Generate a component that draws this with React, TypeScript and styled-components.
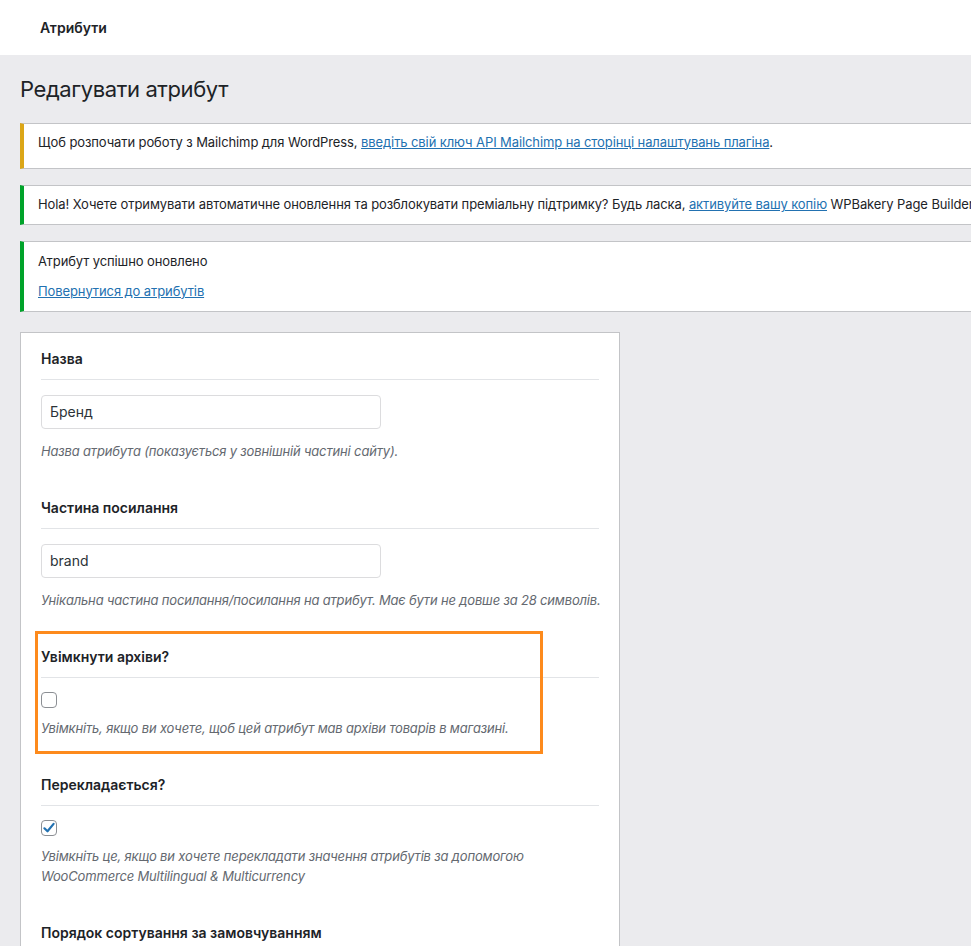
import styled, { createGlobalStyle } from 'styled-components';

const GlobalStyle = createGlobalStyle`
  html, body {
    margin: 0;
    padding: 0;
    background: #ebebee;
    overflow-x: hidden;
  }
  body {
    font-family: Inter, "Noto Sans", sans-serif;
    color: #1d2327;
    font-size: 13px;
  }
`;

const TopBar = styled.header`
  height: 55px;
  background: #fff;
  display: flex;
  align-items: center;
  padding-left: 40px;
`;

const TopTitle = styled.h2`
  margin: 0;
  font-size: 14px;
  font-weight: 600;
  color: #1d2327;
`;

const Main = styled.main`
  width: 1200px;
  padding: 0 0 0 20px;
`;

const PageTitle = styled.h1`
  margin: 19px 0 19px;
  font-size: 22px;
  font-weight: 400;
  letter-spacing: -0.4px;
  line-height: 30px;
  color: #1d2327;
`;

const NoticeList = styled.div`
  display: flex;
  flex-direction: column;
  gap: 16px;
`;

const Notice = styled.div<{ $tone: 'warning' | 'success'; $tall?: boolean }>`
  background: #fff;
  border: 1px solid #c3c4c7;
  border-left: 4px solid ${(p) => (p.$tone === 'warning' ? '#dba617' : '#00a32a')};
  padding: ${(p) => (p.$tall ? '0 12px 7px' : '1px 12px')};
  white-space: nowrap;

  p {
    margin: 6.5px 0;
    padding: 2px;
    font-size: 13px;
    line-height: 1.5;
    letter-spacing: -0.1px;
    color: #1d2327;
  }
`;

const Link = styled.a`
  color: #2271b1;
  text-decoration: underline;
`;

const Panel = styled.div`
  margin-top: 20px;
  width: 558px;
  background: #fff;
  border: 1px solid #c3c4c7;
  padding: 16px 20px 40px;
  display: flex;
  flex-direction: column;
  gap: 37px;
`;

const Field = styled.div`
  position: relative;
  display: flex;
  flex-direction: column;
`;

const Highlight = styled.div`
  position: absolute;
  top: -16px;
  left: -6px;
  width: 502px;
  height: 117px;
  border: 3px solid #fd8a1c;
  pointer-events: none;
`;

const Label = styled.label`
  font-size: 14px;
  font-weight: 600;
  line-height: 20px;
  padding-bottom: 10px;
  border-bottom: 1px solid #e2e4e7;
  color: #1d2327;
`;

const TextInput = styled.input`
  margin-top: 15px;
  box-sizing: border-box;
  width: 340px;
  height: 34px;
  padding: 0 8px;
  border: 1px solid #dcdcde;
  border-radius: 4px;
  font-family: inherit;
  font-size: 14px;
  color: #2c3338;
  background: #fff;
  outline: none;
`;

const CheckBox = styled.span`
  margin: 14px 0 -2px;
  box-sizing: border-box;
  width: 16px;
  height: 16px;
  border: 1px solid #8c8f94;
  border-radius: 4px;
  background: #fff;
  display: flex;
  align-items: center;
  justify-content: center;
`;

const Description = styled.p`
  margin: 12px 0 0;
  font-size: 13px;
  font-style: italic;
  line-height: 20px;
  letter-spacing: -0.17px;
  color: #646970;
  white-space: nowrap;
`;

const Check = () => (
  <svg width="14" height="14" viewBox="0 0 14 14">
    <path d="M2.4 7.3 L5.5 10.3 L11.6 2.9" fill="none" stroke="#2271b1" strokeWidth="2.2" strokeLinecap="round" strokeLinejoin="round" />
  </svg>
);

export default function App() {
  return (
    <>
      <GlobalStyle />
      <TopBar>
        <TopTitle>Атрибути</TopTitle>
      </TopBar>
      <Main>
        <PageTitle>Редагувати атрибут</PageTitle>

        <NoticeList>
          <Notice $tone="warning" $tall>
            <p>
              Щоб розпочати роботу з Mailchimp для WordPress,{' '}
              <Link href="#">введіть свій ключ API Mailchimp на сторінці налаштувань плагіна</Link>.
            </p>
          </Notice>
          <Notice $tone="success">
            <p>
              Hola! Хочете отримувати автоматичне оновлення та розблокувати преміальну підтримку? Будь ласка,{' '}
              <Link href="#">активуйте вашу копію</Link> WPBakery Page Builder.
            </p>
          </Notice>
          <Notice $tone="success">
            <p>Атрибут успішно оновлено</p>
            <p>
              <Link href="#">Повернутися до атрибутів</Link>
            </p>
          </Notice>
        </NoticeList>

        <Panel>
          <Field>
            <Label>Назва</Label>
            <TextInput defaultValue="Бренд" />
            <Description>Назва атрибута (показується у зовнішній частині сайту).</Description>
          </Field>

          <Field>
            <Label>Частина посилання</Label>
            <TextInput defaultValue="brand" />
            <Description>Унікальна частина посилання/посилання на атрибут. Має бути не довше за 28 символів.</Description>
          </Field>

          <Field>
            <Highlight />
            <Label>Увімкнути архіви?</Label>
            <CheckBox />
            <Description>Увімкніть, якщо ви хочете, щоб цей атрибут мав архіви товарів в магазині.</Description>
          </Field>

          <Field>
            <Label>Перекладається?</Label>
            <CheckBox>
              <Check />
            </CheckBox>
            <Description>
              Увімкніть це, якщо ви хочете перекладати значення атрибутів за допомогою
              <br />
              WooCommerce Multilingual &amp; Multicurrency
            </Description>
          </Field>

          <Field>
            <Label>Порядок сортування за замовчуванням</Label>
          </Field>
        </Panel>
      </Main>
    </>
  );
}
